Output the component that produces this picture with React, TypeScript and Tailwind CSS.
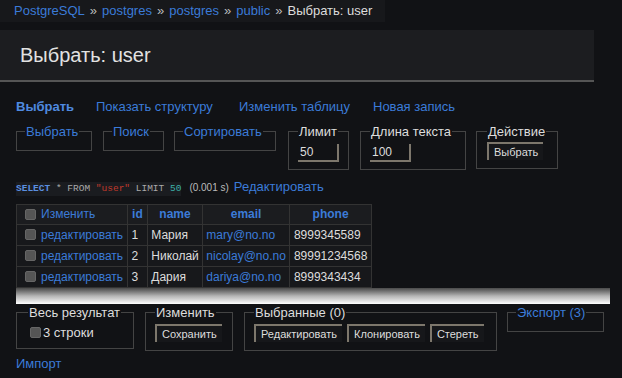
const LINK = 'text-[#3b7bd8]'

function Legend({ children, link }: { children: React.ReactNode; link?: boolean }) {
  return <legend className={`px-[1px] whitespace-nowrap ${link ? LINK : 'text-[#ddd]'}`}>{children}</legend>
}

function Btn({ children }: { children: React.ReactNode }) {
  return (
    <span className="inline-block whitespace-nowrap border-t-2 border-l-2 border-t-[#7d776c] border-l-[#7d776c] bg-[#16171a] px-[5px] py-[1px] text-[11px] leading-[14px] text-[#ddd]">
      {children}
    </span>
  )
}

function Inp({ value, w }: { value: string; w: string }) {
  return (
    <span className={`inline-block ${w} border-r-2 border-b-2 border-r-[#7d776c] border-b-[#7d776c] px-[2px] text-[12px] leading-[16px] text-[#ddd]`}>
      {value}
    </span>
  )
}

function Box() {
  return <span className="inline-block h-[11px] w-[11px] shrink-0 rounded-[2px] border border-[#666] bg-[#555]" />
}

const rows = [
  { id: 1, name: 'Мария', email: 'mary@no.no', phone: '8999345589' },
  { id: 2, name: 'Николай', email: 'nicolay@no.no', phone: '89991234568' },
  { id: 3, name: 'Дария', email: 'dariya@no.no', phone: '8999343434' },
]

export default function App() {
  return (
    <div className="h-[378px] w-[622px] overflow-hidden whitespace-nowrap bg-[#111215] font-['Liberation_Sans',Arial,sans-serif] text-[12px] text-[#ddd]">
      <div className="flex h-[22px] w-[385px] items-center bg-[#17181b] pl-[14px] text-[13px]">
        <span className={LINK}>PostgreSQL</span>
        <span className="px-[5px] text-[#bbb]">»</span>
        <span className={LINK}>postgres</span>
        <span className="px-[5px] text-[#bbb]">»</span>
        <span className={LINK}>postgres</span>
        <span className="px-[5px] text-[#bbb]">»</span>
        <span className={LINK}>public</span>
        <span className="px-[5px] text-[#bbb]">»</span>
        <span className="text-[#ddd]">Выбрать: user</span>
      </div>

      <div className="mt-[8px] flex h-[52px] w-[594px] items-center border-b-2 border-[#555] bg-[#1c1d20] pl-[20px] text-[20px] text-[#e2e2e2]">
        Выбрать: user
      </div>

      <div className="mt-[16px] flex pl-[16px] text-[13px] leading-[18px]">
        <span className="w-[80px] font-bold text-[#4f8ae0]">Выбрать</span>
        <span className={`w-[143px] ${LINK}`}>Показать структуру</span>
        <span className={`w-[134px] ${LINK}`}>Изменить таблицу</span>
        <span className={LINK}>Новая запись</span>
      </div>

      <div className="mt-[7px] flex items-start pl-[16px] text-[13px] leading-[17px]">
        <fieldset className="w-[76px] border border-[#444] px-[8px] pb-[10px]">
          <Legend link>Выбрать</Legend>
        </fieldset>
        <fieldset className="ml-[11px] w-[61px] border border-[#444] px-[8px] pb-[10px]">
          <Legend link>Поиск</Legend>
        </fieldset>
        <fieldset className="ml-[10px] w-[102px] border border-[#444] px-[8px] pb-[10px]">
          <Legend link>Сортировать</Legend>
        </fieldset>
        <fieldset className="ml-[12px] w-[61px] border border-[#444] px-[9px] pt-[3px] pb-[7px]">
          <Legend>Лимит</Legend>
          <Inp value="50" w="w-[41px]" />
        </fieldset>
        <fieldset className="ml-[11px] w-[106px] border border-[#444] px-[9px] pt-[3px] pb-[7px]">
          <Legend>Длина текста</Legend>
          <Inp value="100" w="w-[41px]" />
        </fieldset>
        <fieldset className="ml-[10px] w-[82px] border border-[#444] px-[10px] pt-[2px] pb-[8px]">
          <Legend>Действие</Legend>
          <Btn>Выбрать</Btn>
        </fieldset>
      </div>

      <div className="mt-[7px] flex items-baseline pl-[16px]">
        <code className="bg-[#1a1c20] font-['Liberation_Mono',monospace] text-[9.5px] text-[#aaa]">
          <span className="font-bold text-[#5b8fe0]">SELECT</span> * FROM{' '}
          <span className="text-[#c0392b]">"user"</span> LIMIT <span className="text-[#3cb0a8]">50</span>
        </code>
        <span className="ml-[8px] text-[10px] text-[#bbb]">(0.001 s)</span>
        <span className={`ml-[5px] text-[13px] ${LINK}`}>Редактировать</span>
      </div>

      <table className="mt-[7px] ml-[16px] border-collapse border border-[#333] bg-[#17181b] text-[12px] leading-[14px]">
        <thead>
          <tr className="h-[20px] bg-[#1b1c1f]">
            <td className="border border-[#333] pr-[4px] pl-[8px]">
              <div className="flex items-center gap-[5px]">
                <Box />
                <span className={LINK}>Изменить</span>
              </div>
            </td>
            <th className="border border-[#333] px-[4px] font-bold text-[#3b7bd8]">id</th>
            <th className="border border-[#333] px-[4px] font-bold text-[#3b7bd8]">name</th>
            <th className="border border-[#333] px-[4px] font-bold text-[#3b7bd8]">email</th>
            <th className="border border-[#333] px-[4px] font-bold text-[#3b7bd8]">phone</th>
          </tr>
        </thead>
        <tbody>
          {rows.map((r) => (
            <tr key={r.id} className="h-[21px]">
              <td className="border border-[#333] pr-[4px] pl-[8px]">
                <div className="flex items-center gap-[5px]">
                  <Box />
                  <span className={LINK}>редактировать</span>
                </div>
              </td>
              <td className="border border-[#333] px-[3.5px]">{r.id}</td>
              <td className="border border-[#333] px-[3.5px]">{r.name}</td>
              <td className={`border border-[#333] px-[3px] ${LINK}`}>{r.email}</td>
              <td className="border border-[#333] px-[4px]">{r.phone}</td>
            </tr>
          ))}
        </tbody>
      </table>

      <div className="ml-[16px] h-[16px] w-[594px] bg-gradient-to-b from-[#4a4a4a] via-[#b5b5b5] to-white" />

      <div className="flex items-start pl-[16px] text-[13px] leading-[17px]">
        <fieldset className="w-[118px] border border-[#444] px-[11px] pt-[3px] pb-[7px]">
          <Legend>Весь результат</Legend>
          <div className="flex items-center gap-[2px] pl-[2px]">
            <Box />
            <span>3 строки</span>
          </div>
        </fieldset>
        <fieldset className="ml-[11px] w-[88px] border border-[#444] px-[9px] pt-[3px] pb-[8px]">
          <Legend>Изменить</Legend>
          <Btn>Сохранить</Btn>
        </fieldset>
        <fieldset className="ml-[11px] w-[253px] border border-[#444] px-[9px] pt-[3px] pb-[8px]">
          <Legend>Выбранные (0)</Legend>
          <div className="flex gap-[5px]">
            <Btn>Редактировать</Btn>
            <Btn>Клонировать</Btn>
            <Btn>Стереть</Btn>
          </div>
        </fieldset>
        <fieldset className="ml-[10px] w-[97px] border border-[#444] px-[8px] pb-[10px]">
          <Legend link>Экспорт (3)</Legend>
        </fieldset>
      </div>

      <div className={`mt-[3px] pl-[16px] text-[13px] ${LINK}`}>Импорт</div>
    </div>
  )
}
